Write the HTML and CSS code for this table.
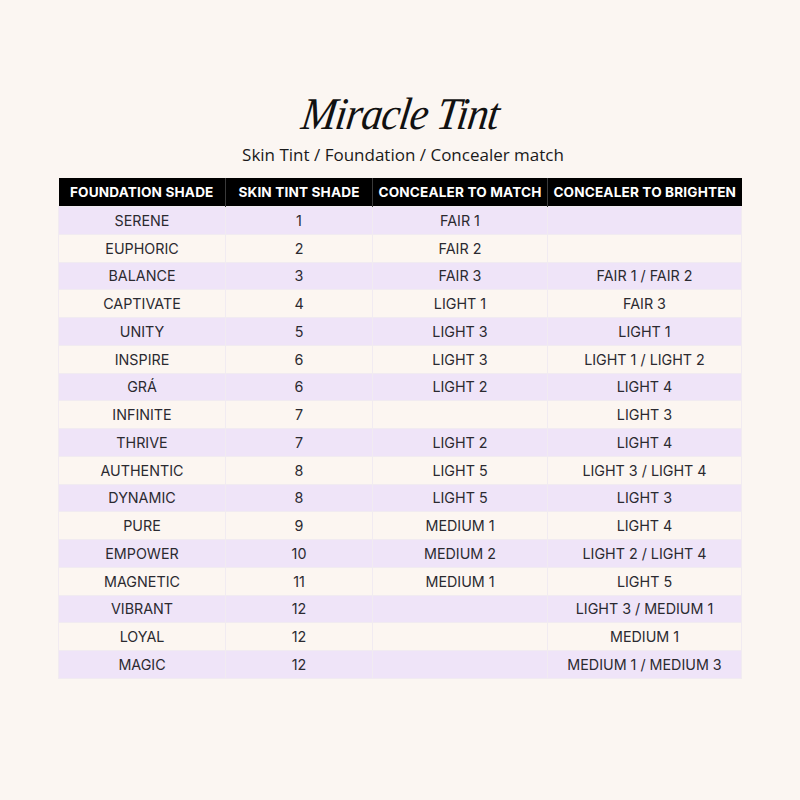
FILE: index.html
```html
<!DOCTYPE html>
<html>
<head>
<meta charset="utf-8">
<link rel="stylesheet" href="styles.css">
</head>
<body>
<div class="page">
  <h1 class="title">Miracle Tint</h1>
  <p class="subtitle">Skin Tint / Foundation / Concealer match</p>
  <table class="chart">
    <colgroup>
      <col class="c1"><col class="c2"><col class="c3"><col class="c4">
    </colgroup>
    <thead>
      <tr><th>FOUNDATION SHADE</th><th>SKIN TINT SHADE</th><th>CONCEALER TO MATCH</th><th>CONCEALER TO BRIGHTEN</th></tr>
    </thead>
    <tbody>
      <tr><td>SERENE</td><td>1</td><td>FAIR 1</td><td></td></tr>
      <tr><td>EUPHORIC</td><td>2</td><td>FAIR 2</td><td></td></tr>
      <tr><td>BALANCE</td><td>3</td><td>FAIR 3</td><td>FAIR 1 / FAIR 2</td></tr>
      <tr><td>CAPTIVATE</td><td>4</td><td>LIGHT 1</td><td>FAIR 3</td></tr>
      <tr><td>UNITY</td><td>5</td><td>LIGHT 3</td><td>LIGHT 1</td></tr>
      <tr><td>INSPIRE</td><td>6</td><td>LIGHT 3</td><td>LIGHT 1 / LIGHT 2</td></tr>
      <tr><td>GRÁ</td><td>6</td><td>LIGHT 2</td><td>LIGHT 4</td></tr>
      <tr><td>INFINITE</td><td>7</td><td></td><td>LIGHT 3</td></tr>
      <tr><td>THRIVE</td><td>7</td><td>LIGHT 2</td><td>LIGHT 4</td></tr>
      <tr><td>AUTHENTIC</td><td>8</td><td>LIGHT 5</td><td>LIGHT 3 / LIGHT 4</td></tr>
      <tr><td>DYNAMIC</td><td>8</td><td>LIGHT 5</td><td>LIGHT 3</td></tr>
      <tr><td>PURE</td><td>9</td><td>MEDIUM 1</td><td>LIGHT 4</td></tr>
      <tr><td>EMPOWER</td><td>10</td><td>MEDIUM 2</td><td>LIGHT 2 / LIGHT 4</td></tr>
      <tr><td>MAGNETIC</td><td>11</td><td>MEDIUM 1</td><td>LIGHT 5</td></tr>
      <tr><td>VIBRANT</td><td>12</td><td></td><td>LIGHT 3 / MEDIUM 1</td></tr>
      <tr><td>LOYAL</td><td>12</td><td></td><td>MEDIUM 1</td></tr>
      <tr><td>MAGIC</td><td>12</td><td></td><td>MEDIUM 1 / MEDIUM 3</td></tr>
    </tbody>
  </table>
</div>
</body>
</html>
```

FILE: styles.css
```css
html, body {
  margin: 0;
  padding: 0;
  background: #fbf6f2;
}

.page {
  width: 800px;
  height: 800px;
  display: flex;
  flex-direction: column;
  align-items: center;
  padding-top: 88px;
  box-sizing: border-box;
}

.title {
  margin: 0;
  font-family: "Liberation Serif", serif;
  font-style: italic;
  font-weight: normal;
  font-size: 42px;
  line-height: 52px;
  color: #111;
  letter-spacing: -1px;
  transform: skewX(-8deg) scaleY(1.08);
}

.subtitle {
  margin: 4px 0 0 6px;
  font-family: "Open Sans", sans-serif;
  font-size: 17px;
  line-height: 22px;
  color: #1a1a1a;
}

.chart {
  margin-top: 12px;
  width: 683px;
  border-collapse: collapse;
  table-layout: fixed;
  font-family: Inter, "Open Sans", sans-serif;
}

.c1 { width: 167px; }
.c2 { width: 147px; }
.c3 { width: 175px; }
.c4 { width: 194px; }

.chart th {
  background: #000;
  color: #fff;
  font-size: 13.6px;
  font-weight: 700;
  letter-spacing: 0.15px;
  height: 28px;
  padding: 0;
  text-align: center;
  border-left: 1px solid #3a3a3a;
}

.chart th:first-child { border-left: none; }

.chart td {
  height: 26.75px;
  padding: 0;
  text-align: center;
  font-size: 14.3px;
  color: #2b2a30;
  border: 1px solid #f1ebf1;
}

.chart tbody tr:nth-child(odd) td { background: #efe4f8; }
.chart tbody tr:nth-child(even) td { background: #fcf6f1; }
```
